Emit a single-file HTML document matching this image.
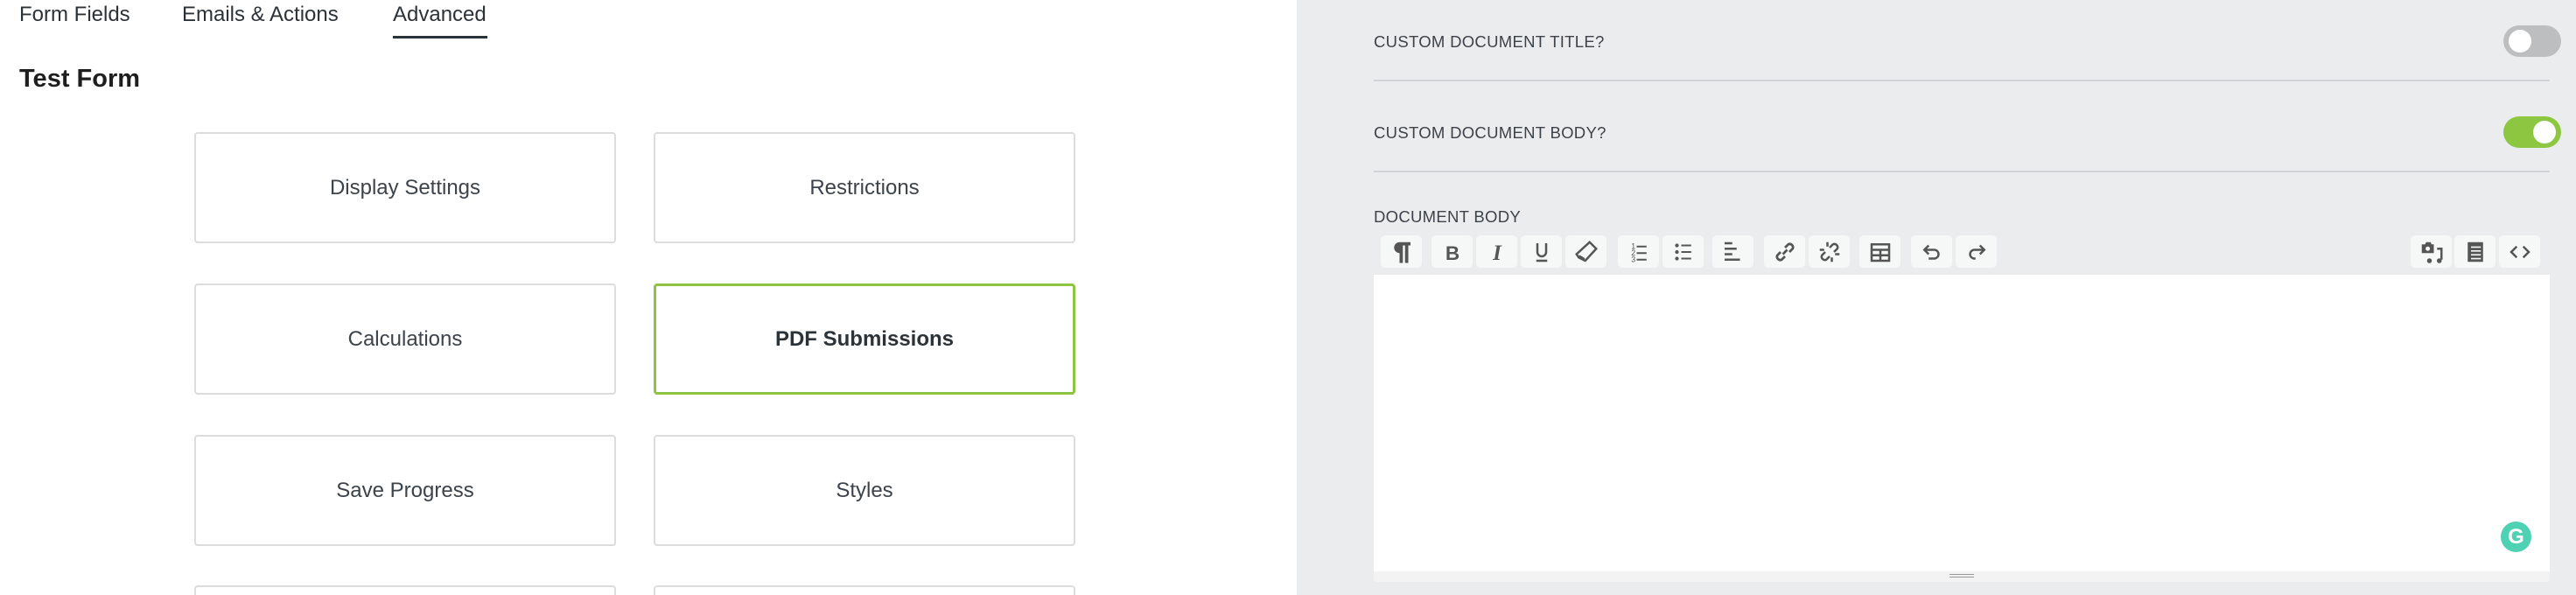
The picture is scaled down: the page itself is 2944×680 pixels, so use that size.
<!DOCTYPE html>
<html><head><meta charset="utf-8"><style>
*{box-sizing:border-box;margin:0;padding:0}
html,body{width:2944px;height:680px;overflow:hidden}
body{background:#fff;font-family:"Liberation Sans",sans-serif}
#w{position:relative;width:2944px;height:680px;overflow:hidden}
.a{position:absolute}
.tab{position:absolute;top:2px;font-size:24px;color:#2c3338;line-height:30px}
.card{position:absolute;width:482px;height:127px;border:2px solid #dcdcde;border-radius:4px;background:#fff;display:flex;align-items:center;justify-content:center;font-size:24px;color:#3c434a}
.panel{position:absolute;left:1482px;top:0;width:1462px;height:680px;background:#ebecee}
.lbl{position:absolute;left:1570px;font-size:18.5px;color:#3c434a;letter-spacing:.3px}
.hr{position:absolute;left:1570px;width:1344px;height:2px;background:#d0d2d5}
.tg{position:absolute;left:2861px;width:66px;height:36px;border-radius:18px}
.tg i{position:absolute;top:5px;width:26px;height:26px;border-radius:50%;background:#fff}
.btn{position:absolute;top:269px;width:47px;height:37px;background:#f6f7f7;border-radius:5px;display:flex;align-items:center;justify-content:center}
.btn svg{width:30px;height:30px}
</style></head><body><div id="w">
<div class="tab" style="left:22px">Form Fields</div>
<div class="tab" style="left:208px">Emails &amp; Actions</div>
<div class="tab" style="left:449px">Advanced</div>
<div class="a" style="left:449px;top:41px;width:108px;height:3px;background:#2c3338"></div>
<div class="a" style="left:22px;top:74px;font-size:29px;font-weight:bold;color:#1e1e1e">Test Form</div>

<div class="card" style="left:222px;top:151px">Display Settings</div>
<div class="card" style="left:747px;top:151px">Restrictions</div>
<div class="card" style="left:222px;top:324px">Calculations</div>
<div class="card" style="left:747px;top:324px;border:3px solid #8dc442;font-weight:bold;color:#2c3338">PDF Submissions</div>
<div class="card" style="left:222px;top:497px">Save Progress</div>
<div class="card" style="left:747px;top:497px">Styles</div>
<div class="card" style="left:222px;top:669px;height:11px;border-bottom:none;border-radius:4px 4px 0 0"></div>
<div class="card" style="left:747px;top:669px;height:11px;border-bottom:none;border-radius:4px 4px 0 0"></div>

<div class="panel"></div>
<div class="lbl" style="top:37px">CUSTOM DOCUMENT TITLE?</div>
<div class="tg" style="top:29px;background:#bdbec0"><i style="left:6px"></i></div>
<div class="hr" style="top:91px"></div>
<div class="lbl" style="top:141px">CUSTOM DOCUMENT BODY?</div>
<div class="tg" style="top:133px;background:#8dc742"><i style="left:34px"></i></div>
<div class="hr" style="top:195px"></div>
<div class="lbl" style="top:237px">DOCUMENT BODY</div>

<div class="btn" style="left:1578px"><svg viewBox="0 0 24 24"><path d="M10 3h10v3h-2v16h-3V6h-2v16h-3v-9a5 5 0 0 1 0-10z" fill="#555"/></svg></div>
<div class="btn" style="left:1636px"><svg viewBox="0 0 24 24"><text x="12" y="19" text-anchor="middle" font-family="Liberation Sans" font-weight="bold" font-size="18" fill="#555">B</text></svg></div>
<div class="btn" style="left:1687px"><svg viewBox="0 0 24 24"><text x="12" y="19" text-anchor="middle" font-family="Liberation Serif" font-style="italic" font-weight="bold" font-size="20" fill="#555">I</text></svg></div>
<div class="btn" style="left:1738px"><svg viewBox="0 0 24 24"><path d="M8 4v8a4 4 0 0 0 8 0V4" stroke="#555" stroke-width="2" fill="none"/><rect x="7" y="19" width="10" height="2" fill="#555"/></svg></div>
<div class="btn" style="left:1789px"><svg viewBox="0 0 24 24"><path d="M15 3l6 6-10 11-6-3-2-3z" stroke="#555" stroke-width="2" fill="none"/><path d="M5 16l5 3" stroke="#555" stroke-width="3"/></svg></div>
<div class="btn" style="left:1849px"><svg viewBox="0 0 24 24"><text x="5" y="9" font-size="7" fill="#555" font-family="Liberation Sans">1</text><text x="5" y="15" font-size="7" fill="#555" font-family="Liberation Sans">2</text><text x="5" y="21" font-size="7" fill="#555" font-family="Liberation Sans">3</text><path d="M10 7h9M10 13h9M10 19h9" stroke="#555" stroke-width="1.6"/></svg></div>
<div class="btn" style="left:1900px"><svg viewBox="0 0 24 24"><circle cx="6" cy="6" r="1.7" fill="#555"/><circle cx="6" cy="12" r="1.7" fill="#555"/><circle cx="6" cy="18" r="1.7" fill="#555"/><path d="M10 6h9M10 12h9M10 18h9" stroke="#555" stroke-width="1.6"/></svg></div>
<div class="btn" style="left:1957px"><svg viewBox="0 0 24 24"><path d="M4 4h7M4 9h11M4 14h7M4 19h14" stroke="#555" stroke-width="2"/></svg></div>
<div class="btn" style="left:2016px"><svg viewBox="0 0 24 24"><path d="M10 14l4-4M8 12l-3 3a3 3 0 0 0 4 4l3-3M16 12l3-3a3 3 0 0 0-4-4l-3 3" stroke="#555" stroke-width="2.2" fill="none"/></svg></div>
<div class="btn" style="left:2067px"><svg viewBox="0 0 24 24"><path d="M8 12l-3 3a3 3 0 0 0 4 4l3-3M16 12l3-3a3 3 0 0 0-4-4l-3 3M10 3v4M14 17v4M3 10h4M17 14h4" stroke="#555" stroke-width="2" fill="none"/></svg></div>
<div class="btn" style="left:2125px"><svg viewBox="0 0 24 24"><path d="M4 5h16v15H4zM4 10h16M4 15h16M12 10v10" stroke="#555" stroke-width="2" fill="none"/></svg></div>
<div class="btn" style="left:2184px"><svg viewBox="0 0 24 24"><path d="M9 6l-4 4 4 4" stroke="#555" stroke-width="2" fill="none"/><path d="M5 10h9a4 4 0 0 1 0 8h-5" stroke="#555" stroke-width="2" fill="none"/></svg></div>
<div class="btn" style="left:2235px"><svg viewBox="0 0 24 24"><path d="M15 6l4 4-4 4" stroke="#555" stroke-width="2" fill="none"/><path d="M19 10h-9a4 4 0 0 0 0 8h1" stroke="#555" stroke-width="2" fill="none"/></svg></div>

<div class="btn" style="left:2755px"><svg viewBox="0 0 24 24"><path d="M3 5h3l1-2h4l1 2h2v8H3z" fill="#555"/><circle cx="8.5" cy="9" r="2" fill="#f6f7f7"/><path d="M17 9h4v10" stroke="#555" stroke-width="2" fill="none"/><circle cx="10" cy="20" r="2.2" fill="#555"/><circle cx="19" cy="20" r="2.2" fill="#555"/></svg></div>
<div class="btn" style="left:2805px"><svg viewBox="0 0 24 24"><path d="M5 3h14v18H5z" fill="#555"/><path d="M8 7.5h9M8 11h9M8 14.5h9M8 18h9" stroke="#f6f7f7" stroke-width="1.3"/></svg></div>
<div class="btn" style="left:2856px"><svg viewBox="0 0 24 24"><path d="M9 7l-5 5 5 5M15 7l5 5-5 5" stroke="#555" stroke-width="2" fill="none"/></svg></div>

<div class="a" style="left:1570px;top:314px;width:1344px;height:339px;background:#fff"></div>
<div class="a" style="left:1570px;top:653px;width:1344px;height:12px;background:#f3f3f3;border-radius:0 0 4px 4px"></div>
<div class="a" style="left:2228px;top:656px;width:28px;height:1px;background:#999"></div>
<div class="a" style="left:2228px;top:659px;width:28px;height:1px;background:#999"></div>
<div class="a" style="left:2858px;top:596px;width:35px;height:35px;border-radius:50%;background:#15c39a;opacity:.75;color:#fff;font-size:24px;font-weight:bold;text-align:center;line-height:35px">G</div>
</div></body></html>
